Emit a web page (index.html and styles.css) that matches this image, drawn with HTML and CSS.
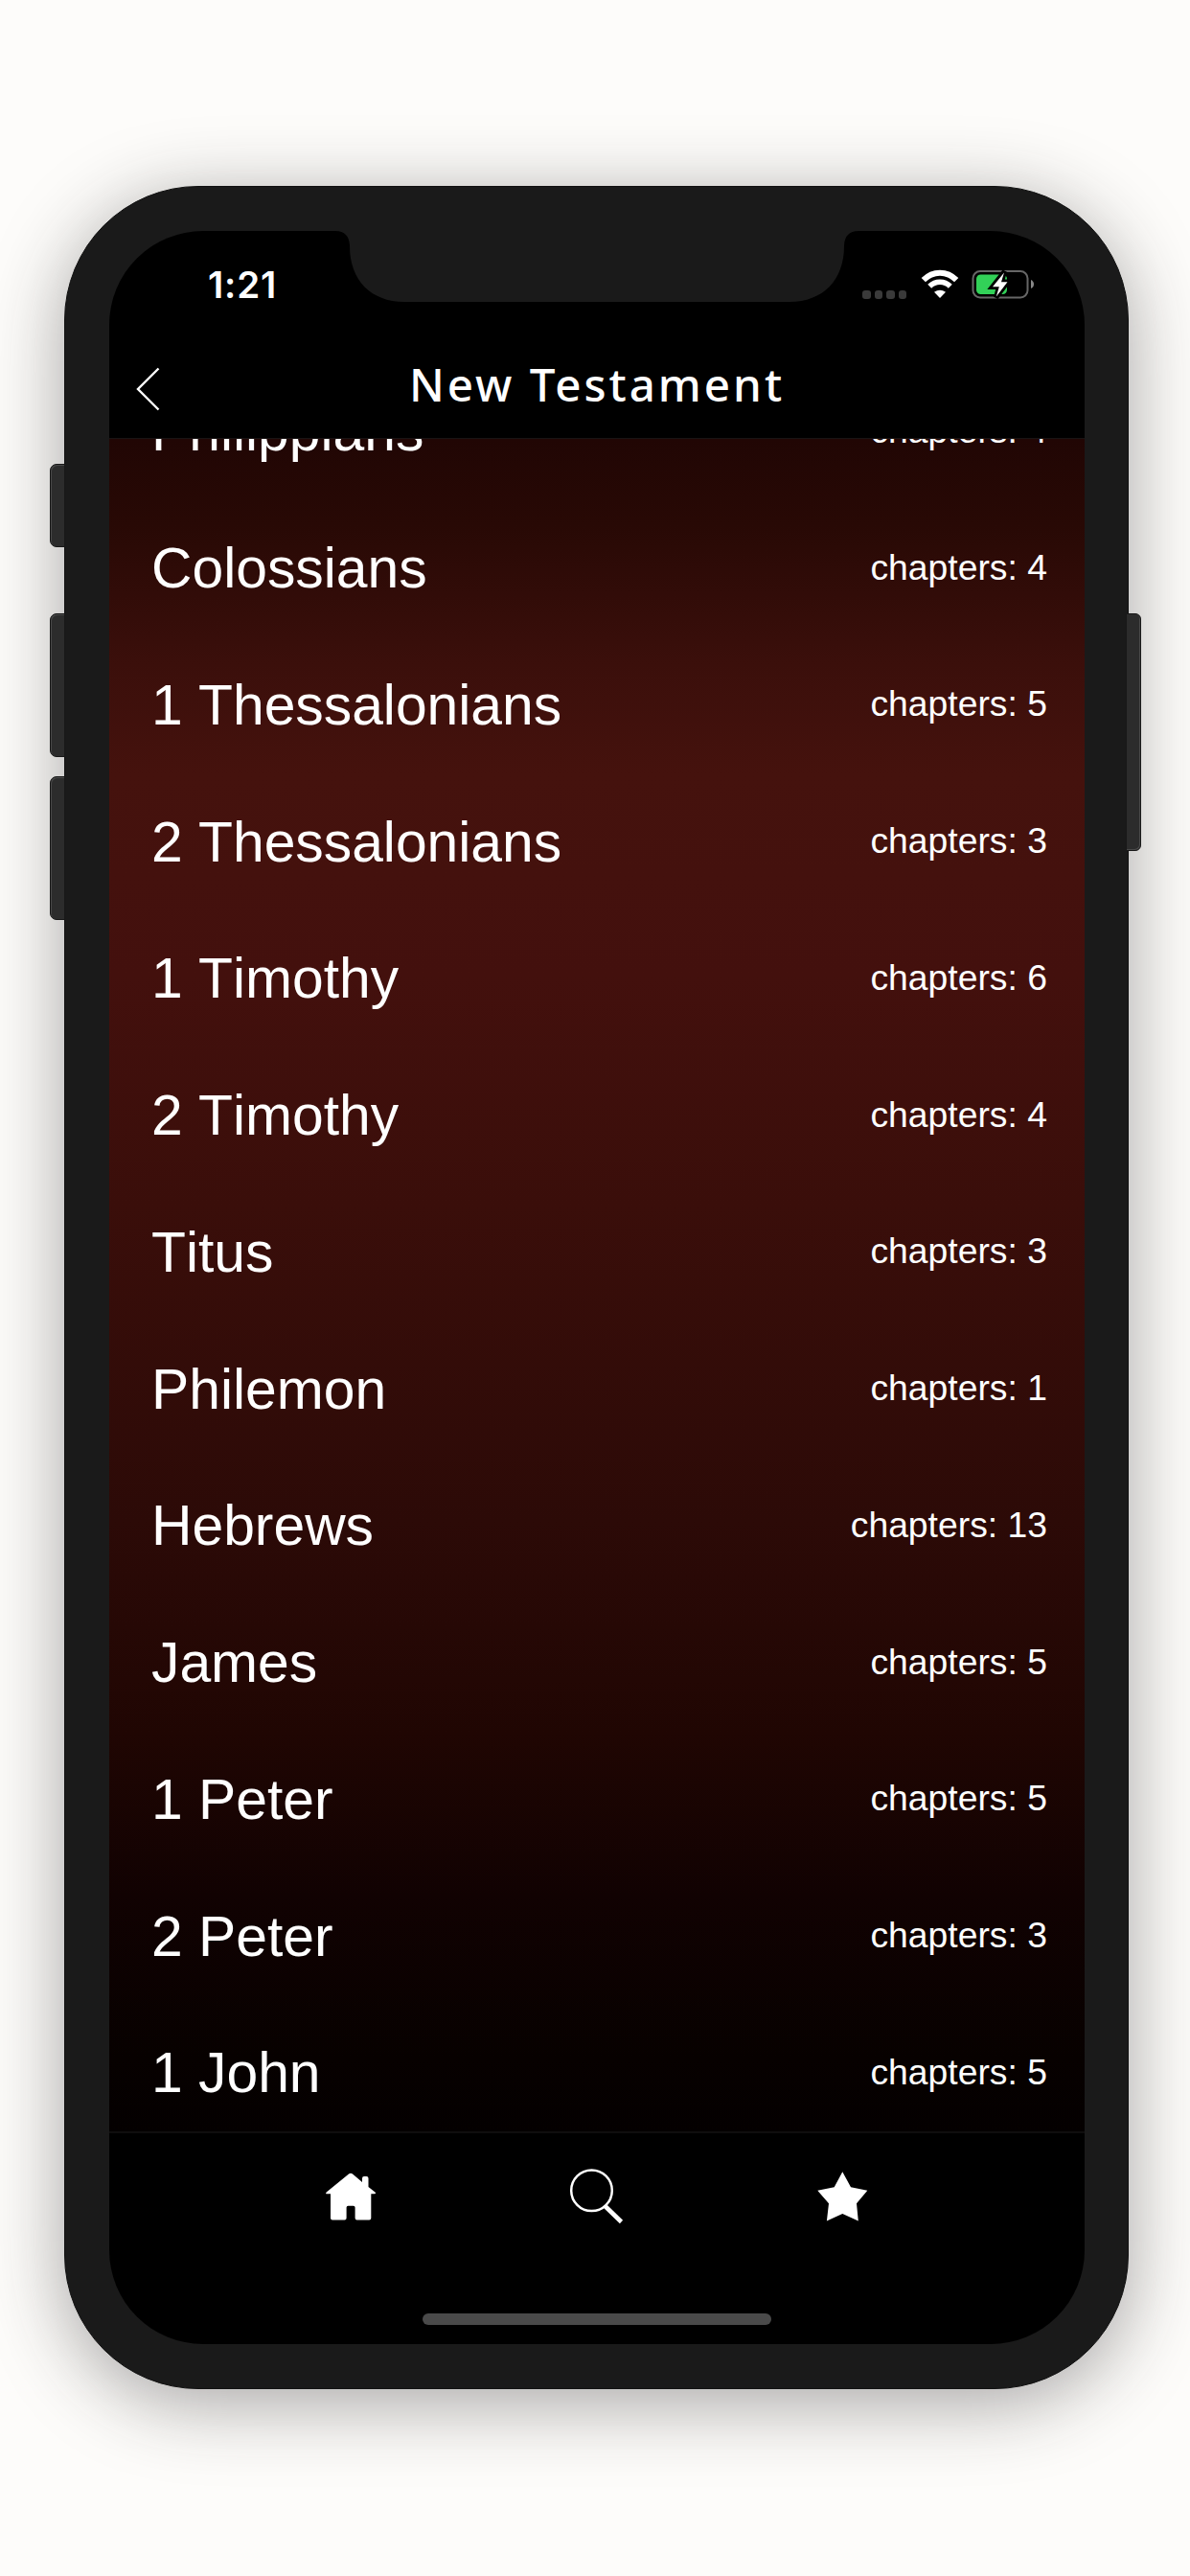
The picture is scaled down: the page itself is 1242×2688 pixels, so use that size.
FILE: index.html
```html
<!DOCTYPE html>
<html lang="en">
<head>
<meta charset="utf-8">
<title>New Testament</title>
<link rel="stylesheet" href="styles.css">
</head>
<body>
<div class="phone">
  <span class="key key-mute"></span>
  <span class="key key-up"></span>
  <span class="key key-down"></span>
  <span class="key key-power"></span>
  <div class="screen">
    <svg class="notch" width="546" height="74" viewBox="0 0 546 74" aria-hidden="true"><path d="M0 0C10 0 15 6 15 16C15 51 37 74 72 74H474C509 74 531 51 531 16C531 6 536 0 546 0Z" fill="#1a1a1a"/></svg>
    <div class="status">
      <span class="time">1:21</span>
      <span class="signals">
        <span class="dots"><i></i><i></i><i></i><i></i></span>
        <svg class="wifi" width="40" height="31" viewBox="0 0 40 31" fill="none" stroke="#fff"><path d="M2.8 11.2C12.5 1.2 27.5 1.2 37.2 11.2" stroke-width="6"/><path d="M9.2 17.8C15.4 11.8 24.6 11.8 30.8 17.8" stroke-width="5.6"/><path d="M20 30L14 23.8Q20 19.5 26 23.8Z" fill="#fff" stroke="none"/></svg>
        <svg class="battery" width="66" height="32" viewBox="0 0 66 32"><rect x="1.500" y="3" width="57" height="27.500" rx="7.500" fill="none" stroke="#666" stroke-width="2"/><path d="M62 12Q65 13.500 65 16.500T62 21Z" fill="#888"/><rect x="5" y="6.500" width="32" height="20.500" rx="4.500" fill="#32d158"/><path d="M34.500 3L21.500 19.500H28.500L25.500 30.500L38 14H31.500Z" fill="#fff" stroke="#000" stroke-width="5"/><path d="M34 4.500L22 19.300H28.800L25.800 29.500L37.500 14.200H31Z" fill="#fff"/></svg>
      </span>
    </div>
    <header class="bar">
      <svg class="back" width="26" height="48" viewBox="0 0 26 48" fill="none" stroke="#fff" stroke-width="2.400"><path d="M24.500 2.500L3 24L24.500 45.500"/></svg>
      <h1 class="title">New Testament</h1>
    </header>
    <main class="list">
      <div class="row"><span class="book">Philippians</span><span class="count">chapters: 4</span></div>
      <div class="row"><span class="book">Colossians</span><span class="count">chapters: 4</span></div>
      <div class="row"><span class="book">1 Thessalonians</span><span class="count">chapters: 5</span></div>
      <div class="row"><span class="book">2 Thessalonians</span><span class="count">chapters: 3</span></div>
      <div class="row"><span class="book">1 Timothy</span><span class="count">chapters: 6</span></div>
      <div class="row"><span class="book">2 Timothy</span><span class="count">chapters: 4</span></div>
      <div class="row"><span class="book">Titus</span><span class="count">chapters: 3</span></div>
      <div class="row"><span class="book">Philemon</span><span class="count">chapters: 1</span></div>
      <div class="row"><span class="book">Hebrews</span><span class="count">chapters: 13</span></div>
      <div class="row"><span class="book">James</span><span class="count">chapters: 5</span></div>
      <div class="row"><span class="book">1 Peter</span><span class="count">chapters: 5</span></div>
      <div class="row"><span class="book">2 Peter</span><span class="count">chapters: 3</span></div>
      <div class="row"><span class="book">1 John</span><span class="count">chapters: 5</span></div>
    </main>
    <nav class="tabs">
      <svg width="60" height="60" viewBox="0 0 60 60" fill="#fff"><path d="M28 7.500Q30 6 32 7.500L42 16V12Q42 10 44 10H46.500Q48.500 10 48.500 12V21L55.500 26.500Q57 28.300 54.500 28.300H51.300V53.500Q51.300 55.500 49.300 55.500H36.500Q34.600 55.500 34.600 53.500V42.500Q34.600 40.700 32.800 40.700H27.400Q25.600 40.700 25.600 42.500V53.500Q25.600 55.500 23.600 55.500H11Q9 55.500 9 53.500V28.300H5.500Q3 28.300 5 26.200Z"/></svg>
      <svg width="60" height="60" viewBox="0 0 60 60" fill="none" stroke="#fff"><circle cx="24.500" cy="24.800" r="21.300" stroke-width="2.500"/><path d="M38.500 41L55.500 57.500" stroke-width="4.600"/></svg>
      <svg width="60" height="60" viewBox="0 0 60 60" fill="#fff"><path d="M29.300 5.300L38 21.300L55.300 24.800L44 38.300L45.800 56.600L29.300 49L12.900 56.600L15 38.300L3.300 24.800L20.700 21.300Z"/></svg>
    </nav>
    <div class="home"><span class="home-pill"></span></div>
  </div>
</div>
</body>
</html>
```
FILE: styles.css
```css
* { box-sizing: border-box; }
body {
  margin: 0;
  height: 2688px;
  padding: 194px 0 0 67px;
  overflow: hidden;
  background: #fdfcfa;
  color: #fff;
  font-family: "Liberation Sans", Arial, sans-serif;
}
.phone {
  position: relative;
  width: 1111px;
  height: 2299px;
  padding: 46px;
  border: 1px solid #111;
  border-radius: 140px;
  background: #1a1a1a;
  box-shadow: 0 14px 80px rgba(36, 32, 32, .4);
}
.key {
  position: absolute;
  left: -16px;
  width: 16px;
  background: #2c2c2c;
  border: 1px solid #181818;
  border-radius: 7px 0 0 7px;
  box-shadow: inset 1px 1px 0 #484848;
}
.key-mute { top: 289px; height: 87px; }
.key-up { top: 445px; height: 150px; }
.key-down { top: 615px; height: 150px; }
.key-power {
  left: auto;
  right: -14px;
  top: 445px;
  width: 16px;
  height: 248px;
  border-radius: 0 6px 6px 0;
  box-shadow: inset -1px -1px 0 #484848;
}
.screen {
  position: relative;
  display: flex;
  flex-direction: column;
  width: 1018px;
  height: 2205px;
  overflow: hidden;
  border-radius: 98px;
  background: #000;
}
.notch { position: absolute; top: 0; left: 236px; }
.status {
  display: flex;
  justify-content: space-between;
  height: 110px;
  padding: 0 52px 0 103px;
}
.time {
  padding-top: 34px;
  font: 600 38.500px/44px Inter, sans-serif;
  letter-spacing: .8px;
}
.signals { display: flex; align-items: flex-start; padding-top: 40px; }
.dots { display: flex; gap: 4px; margin: 22px 15px 0 0; }
.dots i { width: 8.500px; height: 8.500px; border-radius: 3px; background: #3a3a3a; }
.wifi { margin: 0 13px 0 0; }
.battery { margin-top: -1px; }
.bar {
  display: grid;
  grid-template-columns: 60px 1fr 60px;
  flex: none;
  height: 107px;
  border-bottom: 1px solid #191414;
}
.back { margin: 31px 0 0 27px; }
.title {
  margin: 20px 0 0;
  text-align: center;
  font: 500 47.500px/60px "Noto Sans", sans-serif;
  letter-spacing: 3px;
  white-space: nowrap;
}
.list {
  display: flex;
  flex-direction: column;
  justify-content: flex-end;
  flex: none;
  height: 1766px;
  overflow: hidden;
  background: linear-gradient(#210604 0, #280905 90px, #3b0f0b 235px, #45120d 350px, #43100d 560px, #3a0e0a 800px, #2c0a07 1130px, #200603 1350px, #110202 1520px, #070100 1690px, #040000 1766px);
}
.row {
  display: flex;
  flex: none;
  align-items: flex-start;
  justify-content: space-between;
  height: 142.750px;
  padding: 48px 39px 0 44px;
  font-kerning: none;
}
.book { font-size: 58.800px; line-height: 68px; }
.count { margin-top: 10.500px; font-size: 37.300px; line-height: 44px; }
.tabs {
  display: flex;
  flex: none;
  justify-content: center;
  gap: 197px;
  height: 160px;
  padding-top: 35px;
  border-top: 2px solid #0f0e0e;
}
.home { display: flex; justify-content: center; padding-top: 30px; }
.home-pill { width: 364px; height: 12px; border-radius: 6px; background: #4a4a4a; }
```
